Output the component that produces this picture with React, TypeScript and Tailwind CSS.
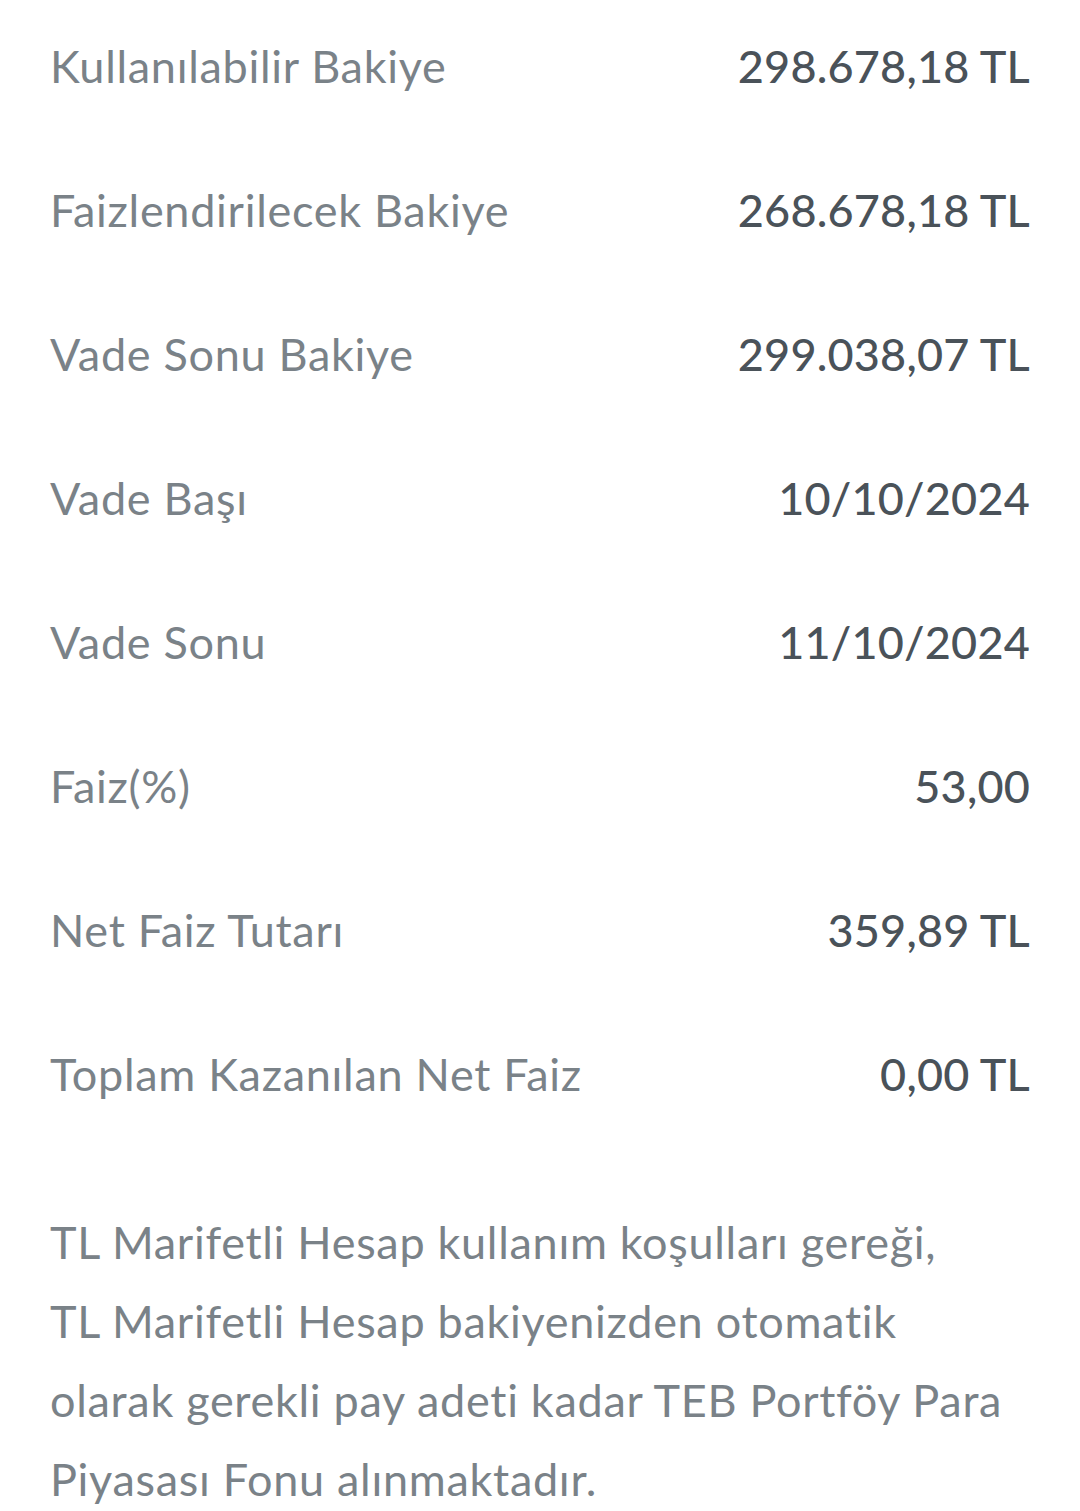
import React from "react";

const rows: [string, string][] = [
  ["Kullanılabilir Bakiye", "298.678,18 TL"],
  ["Faizlendirilecek Bakiye", "268.678,18 TL"],
  ["Vade Sonu Bakiye", "299.038,07 TL"],
  ["Vade Başı", "10/10/2024"],
  ["Vade Sonu", "11/10/2024"],
  ["Faiz(%)", "53,00"],
  ["Net Faiz Tutarı", "359,89 TL"],
  ["Toplam Kazanılan Net Faiz", "0,00 TL"],
];

export default function App() {
  return (
    <div className="w-[1080px] h-[1511px] overflow-hidden bg-white font-['Lato',sans-serif] [font-variant-ligatures:none] px-[50px]">
      <div className="flex flex-col -mt-[5px]">
        {rows.map(([label, value]) => (
          <div key={label} className="flex items-center justify-between h-[144px]">
            <span className="text-[45px] tracking-[0.7px] text-[#7a8288]">{label}</span>
            <span className="text-[45px] font-medium tracking-[0.2px] text-[#4a5259]">{value}</span>
          </div>
        ))}
      </div>
      <p className="mt-[56px] text-[45px] tracking-[0.7px] leading-[79px] text-[#7a8288] whitespace-nowrap">
        TL Marifetli Hesap kullanım koşulları gereği,
        <br />
        TL Marifetli Hesap bakiyenizden otomatik
        <br />
        olarak gerekli pay adeti kadar TEB Portföy Para
        <br />
        Piyasası Fonu alınmaktadır.
      </p>
    </div>
  );
}
